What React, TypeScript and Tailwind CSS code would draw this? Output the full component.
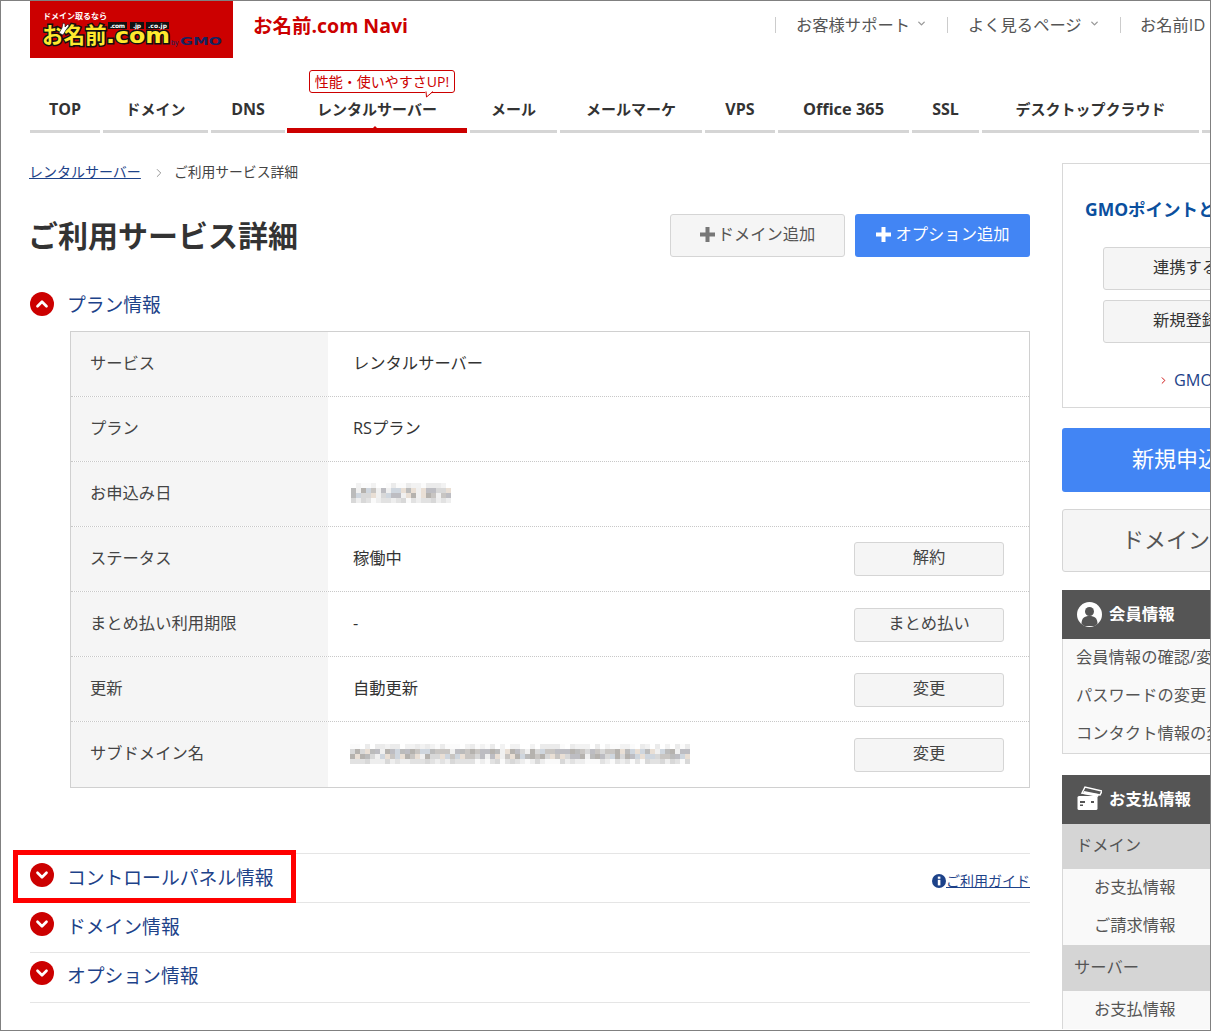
import { ChevronDown, ChevronRight, ChevronUp } from "lucide-react";

const tabs = [
  { label: "TOP", w: "w-[70px] text-[16px]" },
  { label: "ドメイン", w: "w-[105px] text-[15px]" },
  { label: "DNS", w: "w-[74px] text-[16px]" },
  { label: "レンタルサーバー", w: "w-[180px] -ml-px text-[15px]", active: true },
  { label: "メール", w: "w-[87px] text-[15px]" },
  { label: "メールマーケ", w: "w-[142px] text-[15px]" },
  { label: "VPS", w: "w-[70px] text-[16px]" },
  { label: "Office 365", w: "w-[131px] text-[16.4px]" },
  { label: "SSL", w: "w-[67px] text-[16px]" },
  { label: "デスクトップクラウド", w: "w-[217px] text-[15px]" },
  { label: "", w: "w-[20px]" },
];

function Logo() {
  return (
    <svg width="203" height="57" viewBox="0 0 203 57" className="block shrink-0">
      <rect width="203" height="57" fill="#cc0000" />
      <text x="13" y="18" fontSize="8" fontWeight="700" fill="#fff" fontFamily="Noto Sans CJK JP, sans-serif">
        ドメイン取るなら
      </text>
      <g fontWeight="700" fontFamily="Noto Sans CJK JP, sans-serif" fill="#ffe92e" stroke="#111" strokeWidth="3" style={{ paintOrder: "stroke" }}>
        <text x="12" y="42" fontSize="21.5">お名前</text>
      </g>
      <g fontWeight="700" fontFamily="DejaVu Sans, sans-serif" fill="#ffe92e" stroke="#111" strokeWidth="3" style={{ paintOrder: "stroke" }}>
        <text x="76" y="42" fontSize="22" textLength="64" lengthAdjust="spacingAndGlyphs">.com</text>
      </g>
      {/* うさぎの耳 */}
      <path d="M29 32l3-5 1-5 2 1 0 3 3-3 1 2-3 4-3 5z" fill="#fff" stroke="#111" strokeWidth="0.6" />
      <rect x="78" y="21" width="19" height="7" fill="#111" />
      <rect x="100" y="21" width="14" height="7" fill="#111" />
      <rect x="116" y="21" width="23" height="7" fill="#111" />
      <g fontSize="6" fontWeight="700" fill="#fff" fontFamily="DejaVu Sans, sans-serif">
        <text x="80" y="27" textLength="15">.com</text>
        <text x="103" y="27" textLength="8">.jp</text>
        <text x="118" y="27" textLength="19">.co.jp</text>
      </g>
      <text x="141" y="44" fontSize="7" fill="#14245e" fontFamily="Liberation Sans, sans-serif">by</text>
      <text x="150" y="44" fontSize="11" fontWeight="700" fill="#14245e" fontFamily="DejaVu Sans, sans-serif" textLength="42" lengthAdjust="spacingAndGlyphs">
        GMO
      </text>
    </svg>
  );
}

const edgeTop = ["#ffffff", "#fbfbfb", "#f2f2f2", "#ebebeb"];
const middle = ["#bbbbbb", "#c8c5c2", "#bdbdc2", "#cfd6de", "#d8d8d8", "#e9dfd5", "#b5b2ae", "#f0f0f0"];
const edgeBottom = ["#fafafa", "#eeeeee", "#e2e2e2", "#d8d8d8"];

function Mosaic({ cols, seed }: { cols: number; seed: number }) {
  const rects = [];
  let n = seed;
  for (let y = 0; y < 4; y++) {
    const palette = y === 0 ? edgeTop : y === 3 ? edgeBottom : middle;
    for (let x = 0; x < cols; x++) {
      n = (n * 1103515245 + 12345) % 2147483648;
      const idx = Math.floor(n / 65536) % palette.length;
      rects.push(<rect key={`${x}-${y}`} x={x * 5} y={y * 5} width="5" height="5" fill={palette[idx]} />);
    }
  }
  return (
    <svg width={cols * 5} height="20" className="block">
      {rects}
    </svg>
  );
}

function CircleIcon({ up, className }: { up?: boolean; className?: string }) {
  return (
    <span className={`flex h-6 w-6 shrink-0 items-center justify-center rounded-full bg-[#cc0000] ${className ?? ""}`}>
      {up ? <ChevronUp size={18} strokeWidth={3.6} color="#fff" /> : <ChevronDown size={18} strokeWidth={3.6} color="#fff" />}
    </span>
  );
}

function PlusIcon({ color }: { color: string }) {
  return (
    <svg width="15" height="15" viewBox="0 0 15 15" className="shrink-0">
      <path d="M5.5 0h4v5.5H15v4H9.5V15h-4V9.5H0v-4h5.5z" fill={color} />
    </svg>
  );
}

function Row({ label, children, button, last, nudge }: { label: string; children: React.ReactNode; button?: string; last?: boolean; nudge?: boolean }) {
  return (
    <div className={`flex ${last ? "h-[65px]" : "h-[65px] border-b border-dotted border-[#c8c8c8]"}`}>
      <div className="flex w-[257px] shrink-0 items-center bg-[#f5f5f5] pb-[2px] pl-[19px] text-[#444]">{label}</div>
      <div className="flex flex-1 items-center justify-between pl-[25px] pr-[25px] text-[#333]">
        <div className="pb-[2px]">{children}</div>
        {button && (
          <button className={`h-[34px] w-[150px] rounded-[3px] border border-[#d5d5d5] bg-[#f5f5f5] pb-[3px] text-[#444] ${nudge ? "mt-[2px]" : ""}`}>{button}</button>
        )}
      </div>
    </div>
  );
}

function Section({ label, h, iconClass, textClass, guide }: { label: string; h: string; iconClass: string; textClass: string; guide?: boolean }) {
  return (
    <div className={`flex items-center border-b border-[#e5e5e5] ${h}`}>
      <CircleIcon className={iconClass} />
      <span className={`ml-[13px] text-[18.8px] text-[#1d4289] ${textClass}`}>{label}</span>
      {guide && (
        <a className="ml-auto mt-[6px] flex items-center text-[14px] leading-[18px] text-[#1d4289]">
          <svg width="14" height="14" viewBox="0 0 14 14" className="ml-px shrink-0">
            <circle cx="7" cy="7" r="7" fill="#1d4289" />
            <rect x="5.8" y="5.8" width="2.6" height="5.6" fill="#fff" />
            <rect x="5.8" y="2.6" width="2.6" height="2.2" fill="#fff" />
          </svg>
          <span className="underline">ご利用ガイド</span>
        </a>
      )}
    </div>
  );
}

function SideItem({ label, indent }: { label: string; indent?: boolean }) {
  return <div className={`flex h-[38px] items-center pb-[2px] text-[#555] ${indent ? "pl-[31px]" : "pl-[13px]"}`}>{label}</div>;
}

export default function App() {
  return (
    <div className="relative h-[1031px] w-[1211px] overflow-hidden border border-[#808080] bg-white text-[16.3px] text-[#333] [font-family:'Open_Sans','Noto_Sans_CJK_JP',sans-serif]">
      {/* header */}
      <div className="flex h-[57px] pl-[29px]">
        <Logo />
        <div className="flex w-[542px] shrink-0 items-center pb-[8px] pl-[20px] text-[19.5px] font-bold text-[#cc0000]">お名前.com Navi</div>
        <div className="flex items-center pb-[9px] text-[#555]">
          <div className="flex h-[16px] w-[172px] shrink-0 items-center gap-[6px] border-l border-[#ccc] pl-[20px]">
            お客様サポート
            <ChevronDown size={11} strokeWidth={3} color="#999" className="mb-[4px]" />
          </div>
          <div className="flex h-[16px] w-[173px] shrink-0 items-center gap-[7px] border-l border-[#ccc] pl-[20px]">
            よく見るページ
            <ChevronDown size={11} strokeWidth={3} color="#999" className="mb-[4px]" />
          </div>
          <div className="flex h-[16px] shrink-0 items-center border-l border-[#ccc] pl-[19px]">お名前ID</div>
        </div>
      </div>

      {/* tabs */}
      <div className="mt-[27px] flex gap-[3px] pl-[29px]">
        {tabs.map((t) => (
          <div
            key={t.label + t.w}
            className={`relative flex h-[48px] shrink-0 items-center justify-center font-bold text-[#333] ${t.w} ${
              t.active ? "border-b-[5px] border-[#cc0000] pt-[5px]" : "border-b-[3px] border-[#d5d5d5] pt-[3px]"
            }`}
          >
            {t.label}
            {t.active && (
              <>
                <div className="absolute left-[22px] top-[-15px] flex h-[23px] w-[146px] items-center justify-center rounded-[3px] border border-[#cc0000] bg-white text-[14px] font-normal text-[#cc0000]">
                  性能・使いやすさUP!
                  <svg width="10" height="7" viewBox="0 0 10 7" className="absolute bottom-[-6px] left-[115px]">
                    <path d="M0 0 L1 6 L8 0 Z" fill="#fff" />
                    <path d="M1 0.5 L1.5 6 L8 0.5" fill="none" stroke="#cc0000" />
                  </svg>
                </div>
                <span className="absolute bottom-0 left-[86px] h-0 w-0 border-x-[2px] border-b-[2px] border-x-transparent border-b-[#cc0000]" />
              </>
            )}
          </div>
        ))}
      </div>

      {/* body */}
      <div className="flex gap-[32px] pl-[29px]">
        <div className="w-[1000px] shrink-0">
          <div className="mt-[29px] flex h-[20px] items-center text-[13.8px]">
            <a className="-ml-px mb-[2px] text-[14px] text-[#1d4289] underline">レンタルサーバー</a>
            <ChevronRight size={14} strokeWidth={1.5} color="#888" className="ml-[11px] mt-[2px]" />
            <span className="ml-[8px] text-[#444]">ご利用サービス詳細</span>
          </div>

          <div className="mt-[32px] flex h-[43px] items-center">
            <h1 className="-ml-[2px] text-[30px] font-bold text-[#333]">ご利用サービス詳細</h1>
            <button className="ml-auto flex h-[43px] w-[175px] items-center justify-center gap-[3px] rounded-[3px] border border-[#d5d5d5] bg-[#f5f5f5] pb-[3px] text-[#555]">
              <PlusIcon color="#777" />
              ドメイン追加
            </button>
            <button className="ml-[10px] flex h-[43px] w-[175px] items-center justify-center gap-[5px] rounded-[3px] bg-[#4285f4] pb-[3px] text-white">
              <PlusIcon color="#fff" />
              オプション追加
            </button>
          </div>

          <div className="mt-[35px] flex h-[24px] items-center">
            <CircleIcon up />
            <span className="ml-[13px] mt-[2px] text-[18.8px] text-[#1d4289]">プラン情報</span>
          </div>

          <div className="ml-[40px] mt-[15px] border border-[#d0d0d0]">
            <Row label="サービス">レンタルサーバー</Row>
            <Row label="プラン">RSプラン</Row>
            <Row label="お申込み日">
              <div className="mb-[1px] -ml-[2px]">
                <Mosaic cols={20} seed={7} />
              </div>
            </Row>
            <Row label="ステータス" button="解約">稼働中</Row>
            <Row label="まとめ払い利用期限" button="まとめ払い" nudge>-</Row>
            <Row label="更新" button="変更" nudge>自動更新</Row>
            <Row label="サブドメイン名" button="変更" last>
              <div className="-ml-[3px]">
                <Mosaic cols={68} seed={42} />
              </div>
            </Row>
          </div>

          <div className="mt-[65px] border-t border-[#e5e5e5]">
            <Section label="コントロールパネル情報" h="h-[49px]" iconClass="mb-[7px]" textClass="" guide />
            <Section label="ドメイン情報" h="h-[50px]" iconClass="mb-[7px]" textClass="" />
            <Section label="オプション情報" h="h-[50px]" iconClass="mb-[9px]" textClass="mb-[3px]" />
          </div>
        </div>

        {/* sidebar */}
        <div className="mt-[30px] w-[300px] shrink-0">
          <div className="h-[245px] border border-[#d8d8d8]">
            <div className="-ml-px mt-[32px] pl-[23px] text-[17.5px] font-bold leading-[26px] text-[#0a4f9e]">GMOポイントと連携</div>
            <div className="ml-[40px] mt-[25px] flex h-[43px] w-[258px] items-center rounded-[3px] border border-[#d5d5d5] bg-[#f5f5f5] pb-[3px] pl-[49px]">連携する</div>
            <div className="ml-[40px] mt-[10px] flex h-[43px] w-[258px] items-center rounded-[3px] border border-[#d5d5d5] bg-[#f5f5f5] pb-[3px] pl-[49px]">新規登録</div>
            <div className="ml-[95px] mt-[25px] flex items-center gap-[5px] text-[#1d4289]">
              <ChevronRight size={11} strokeWidth={2} color="#cc0000" />
              GMOポイント
            </div>
          </div>

          <div className="mt-[20px] flex h-[64px] items-center rounded-[3px] bg-[#4285f4] pb-[4px] pl-[70px] text-[22px] text-white">新規申込</div>
          <div className="mt-[17px] flex h-[63px] items-center rounded-[3px] border border-[#d5d5d5] bg-[#f5f5f5] pb-[2px] pl-[59px] text-[22px] text-[#555]">ドメイン追加</div>

          <div className="mt-[18px] flex h-[49px] items-center bg-[#555] pl-[15px] text-[16.4px] font-bold text-white">
            <svg width="25" height="25" viewBox="0 0 25 25" className="shrink-0">
              <circle cx="12.5" cy="12.5" r="12.5" fill="#fff" />
              <circle cx="12.5" cy="9.5" r="4.5" fill="#555" />
              <path d="M4.5 22c0-6 3-8 8-8s8 2 8 8l-3 2h-10z" fill="#555" />
            </svg>
            <span className="ml-[7px]">会員情報</span>
          </div>
          <div className="border border-t-0 border-[#d8d8d8] bg-[#f9f9f9]">
            <SideItem label="会員情報の確認/変更" />
            <SideItem label="パスワードの変更" />
            <SideItem label="コンタクト情報の変更" />
          </div>

          <div className="mt-[21px] flex h-[49px] items-center bg-[#555] pl-[15px] text-[16.4px] font-bold text-white">
            <svg width="25" height="25" viewBox="0 0 25 25" className="mb-[3px] shrink-0">
              <path d="M5 7L8 1l17 4-2 4z" fill="none" stroke="#fff" strokeWidth="1.5" />
              <path d="M6 8l1-3 15 3-1 3z" fill="#fff" />
              <rect x="0.5" y="10" width="20" height="14" rx="1.5" fill="#fff" />
              <rect x="3" y="15" width="5" height="2" fill="#555" />
              <rect x="3" y="18.5" width="3" height="1.5" fill="#555" />
              <rect x="14" y="15" width="3" height="2" fill="#555" />
            </svg>
            <span className="ml-[7px]">お支払情報</span>
          </div>
          <div className="flex h-[45px] items-center bg-[#d5d5d5] pb-[2px] pl-[14px] text-[#555]">ドメイン</div>
          <div className="border-l border-[#d8d8d8] bg-[#f9f9f9]">
            <SideItem label="お支払情報" indent />
            <SideItem label="ご請求情報" indent />
          </div>
          <div className="flex h-[46px] items-center bg-[#d5d5d5] pb-[2px] pl-[12px] text-[#555]">サーバー</div>
          <div className="border-l border-[#d8d8d8] bg-[#f9f9f9]">
            <SideItem label="お支払情報" indent />
          </div>
        </div>
      </div>

      {/* 赤枠の注釈 */}
      <div className="absolute left-[12px] top-[849px] h-[53px] w-[283px] border-[5px] border-[#ff0000]" />
    </div>
  );
}
